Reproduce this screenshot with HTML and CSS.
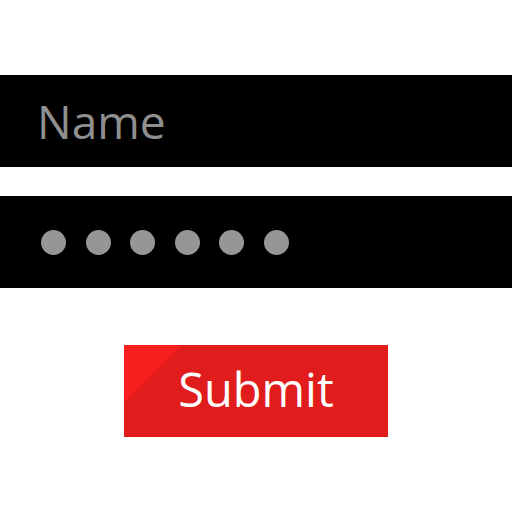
FILE: index.html
```html
<!DOCTYPE html>
<html>
<head>
<meta charset="utf-8">
<link rel="stylesheet" href="styles.css">
</head>
<body>
<div class="form">
  <div class="field name-field"><span class="placeholder">Name</span></div>
  <div class="field pass-field">
    <span class="dot"></span><span class="dot"></span><span class="dot"></span><span class="dot"></span><span class="dot"></span><span class="dot"></span>
  </div>
  <div class="actions"><button class="submit">Submit</button></div>
</div>
</body>
</html>
```
FILE: styles.css
```css
html, body {
  margin: 0;
  padding: 0;
  background: #ffffff;
  width: 512px;
  height: 512px;
  overflow: hidden;
}
.form {
  padding-top: 75px;
  display: flex;
  flex-direction: column;
  gap: 29px;
  font-family: "Open Sans", "Noto Sans", sans-serif;
}
.field {
  height: 92px;
  background: #000000;
  display: flex;
  align-items: center;
}
.name-field {
  padding-left: 37px;
}
.placeholder {
  color: #8f8f8f;
  font-size: 46px;
  line-height: 1;
}
.pass-field {
  padding-left: 41px;
  gap: 19.5px;
}
.dot {
  width: 25px;
  height: 25px;
  border-radius: 50%;
  background: #969696;
}
.actions {
  display: flex;
  justify-content: center;
  margin-top: 28px;
}
.submit {
  width: 264px;
  height: 92px;
  border: none;
  padding: 0 0 3px 0;
  background: linear-gradient(135deg, #f81f1f 41px, #e01c1c 41px);
  color: #ffffff;
  font-family: "Open Sans", "Noto Sans", sans-serif;
  font-size: 47px;
  line-height: 1;
}
```
